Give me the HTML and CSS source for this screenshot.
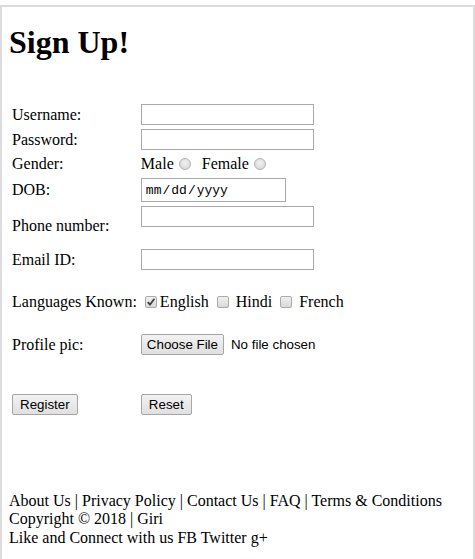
FILE: index.html
```html
<!DOCTYPE html>
<html lang="en">
<head>
<meta charset="utf-8">
<title>Sign Up</title>
<link rel="stylesheet" href="styles.css">
</head>
<body>
<div class="frame">
  <h1 class="title">Sign Up!</h1>
  <form class="signup">
    <table class="grid">
      <tr><td>Username:</td><td><input class="field" type="text" name="username"></td></tr>
      <tr><td>Password:</td><td><input class="field" type="password" name="password"></td></tr>
      <tr><td>Gender:</td><td class="choices">Male<input class="radio" type="radio" name="gender"><span class="gap"></span>Female<input class="radio" type="radio" name="gender"></td></tr>
      <tr><td>DOB:</td><td><input class="date" type="date" name="dob"></td></tr>
      <tr><td>Phone number:</td><td class="tall"><input class="field" type="text" name="phone"></td></tr>
      <tr><td>Email ID:</td><td><input class="field" type="text" name="email"></td></tr>
      <tr class="spacer"><td></td><td></td></tr>
      <tr><td>Languages Known:</td><td class="choices"><input class="check" type="checkbox" checked>English <input class="check" type="checkbox"> Hindi <input class="check" type="checkbox"> French</td></tr>
      <tr class="spacer"><td></td><td></td></tr>
      <tr><td>Profile pic:</td><td><input class="file" type="file" name="pic"></td></tr>
      <tr class="spacer big"><td></td><td></td></tr>
      <tr><td><button class="btn" type="submit">Register</button></td><td><button class="btn" type="reset">Reset</button></td></tr>
    </table>
  </form>
  <footer class="foot">
    <div>About Us | Privacy Policy | Contact Us | FAQ | Terms &amp; Conditions</div>
    <div>Copyright © 2018 | Giri</div>
    <div>Like and Connect with us FB Twitter g+</div>
  </footer>
</div>
</body>
</html>
```

FILE: styles.css
```css
html, body {
  margin: 0;
  background: #fff;
}
body {
  font-family: "Liberation Serif", "Times New Roman", serif;
  font-size: 16px;
  color: #000;
}
.frame {
  margin-top: 5px;
  border: 2px solid #dcdcdc;
  min-height: 600px;
  padding: 0 7px;
}
.title {
  margin: 17px 0 0;
  font-size: 32px;
  font-weight: bold;
  line-height: 37px;
}
.signup {
  margin: 40px 0 0;
}
.grid {
  border-spacing: 2px;
  border-collapse: separate;
}
.grid td {
  padding: 1px;
  vertical-align: middle;
}
.field {
  display: block;
  box-sizing: border-box;
  width: 173px;
  height: 21px;
  margin: 0;
  padding: 1px 2px;
  border: 1px solid #a9a9a9;
  font: 13.33px "Liberation Sans", Arial, sans-serif;
  background: #fff;
}
.date {
  display: block;
  box-sizing: border-box;
  width: 145px;
  height: 24px;
  margin: 0;
  padding: 1px 2px 1px 3px;
  border: 1px solid #a9a9a9;
  font: 13px "Liberation Mono", "Courier New", monospace;
  color: #000;
  background: #fff;
}
.date::-webkit-calendar-picker-indicator {
  display: none;
}
.date::-webkit-inner-spin-button {
  display: none;
}
.tall {
  padding-bottom: 19px !important;
}
.choices {
  line-height: 20px;
  white-space: nowrap;
}
.gap {
  display: inline-block;
  width: 8px;
}
.radio {
  -webkit-appearance: none;
  appearance: none;
  box-sizing: border-box;
  width: 12px;
  height: 12px;
  margin: 0 3px 0 5px;
  vertical-align: -1px;
  border: 1px solid #b3b3b3;
  border-radius: 50%;
  background: radial-gradient(circle at 50% 40%, #f2f2f2 0, #dcdcdc 70%);
}
.check {
  -webkit-appearance: none;
  appearance: none;
  box-sizing: border-box;
  width: 12px;
  height: 12px;
  margin: 0 3px 0 4px;
  vertical-align: -1px;
  border: 1px solid #aaaaaa;
  border-radius: 2px;
  background: linear-gradient(#f0f0f0, #d8d8d8);
}
.check:checked {
  background: url("data:image/svg+xml;utf8,<svg xmlns='http://www.w3.org/2000/svg' width='10' height='10' viewBox='0 0 10 10'><path d='M1.8 5.2 L4 7.6 L8.4 1.8' fill='none' stroke='%23404040' stroke-width='1.8'/></svg>") center / 10px 10px no-repeat, linear-gradient(#f0f0f0, #d8d8d8);
}
.file {
  font: 13.33px "Liberation Sans", Arial, sans-serif;
  color: #000;
  margin: 0;
  vertical-align: middle;
}
.file::file-selector-button,
.btn {
  box-sizing: border-box;
  height: 21px;
  padding: 1px 7px;
  border: 1px solid #a6a6a6;
  border-radius: 2px;
  background: linear-gradient(#f2f2f2, #e0e0e0);
  font: 13.33px "Liberation Sans", Arial, sans-serif;
  color: #000;
}
.file::file-selector-button {
  padding: 1px 5px;
  margin: 0 7px 0 0;
}
.btn {
  margin: 0;
  vertical-align: middle;
}
.spacer td {
  height: 16px;
  padding: 0;
}
.spacer.big td {
  height: 33px;
}
.foot {
  margin-top: 74px;
  line-height: 18.4px;
}
```
